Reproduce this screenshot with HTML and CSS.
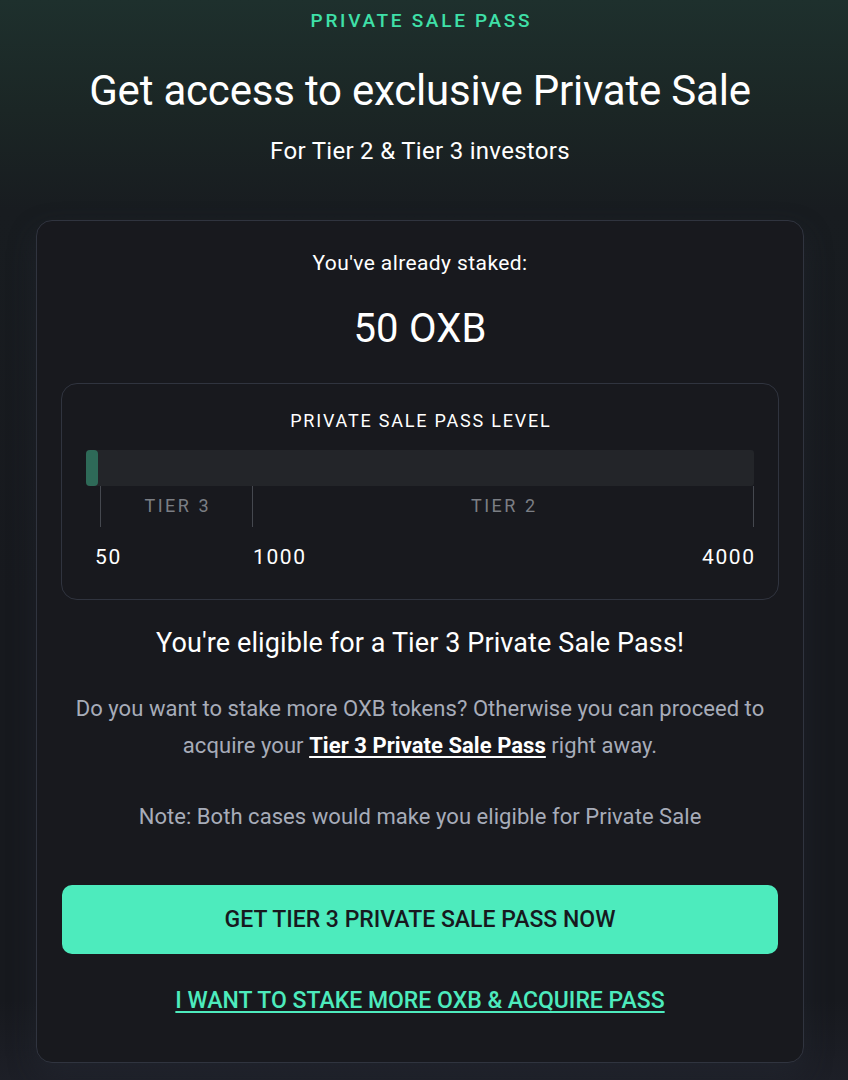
FILE: index.html
```html
<!DOCTYPE html>
<html>
<head>
<meta charset="utf-8">
<link rel="stylesheet" href="styles.css">
</head>
<body>
<div class="page">
  <div class="eyebrow">PRIVATE SALE PASS</div>
  <h1 class="title">Get access to exclusive Private Sale</h1>
  <div class="subtitle">For Tier 2 &amp; Tier 3 investors</div>

  <div class="card">
    <div class="staked-label">You've already staked:</div>
    <div class="staked-value">50 OXB</div>

    <div class="level-box">
      <div class="level-title">PRIVATE SALE PASS LEVEL</div>
      <div class="bar"><div class="bar-fill"></div></div>
      <div class="tiers">
        <div class="tier tier3">TIER 3</div>
        <div class="tier tier2">TIER 2</div>
      </div>
      <div class="scale">
        <span class="s50">50</span>
        <span class="s1000">1000</span>
        <span class="s4000">4000</span>
      </div>
    </div>

    <div class="eligible">You're eligible for a Tier 3 Private Sale Pass!</div>
    <p class="desc">Do you want to stake more OXB tokens? Otherwise you can proceed to acquire your <a class="inline-link">Tier 3 Private Sale Pass</a> right away.</p>
    <p class="note">Note: Both cases would make you eligible for Private Sale</p>

    <button class="cta">GET TIER 3 PRIVATE SALE PASS NOW</button>
    <a class="alt-link">I WANT TO STAKE MORE OXB &amp; ACQUIRE PASS</a>
  </div>
</div>
</body>
</html>
```

FILE: styles.css
```css
* { box-sizing: border-box; }
html, body { margin: 0; padding: 0; }
body {
  background: linear-gradient(180deg, #1e302d 0px, #1b2625 110px, #181c20 210px, #17191e 600px, #17191e 1000px, #1d1f27 1080px);
  background-color: #17191e;
  min-height: 1080px;
  font-family: Roboto, "Liberation Sans", sans-serif;
  color: #ffffff;
}
.page {
  width: 840px;
  display: flex;
  flex-direction: column;
  align-items: center;
  padding-top: 9px;
}
.eyebrow {
  color: #3fe0a8;
  font-size: 19px;
  font-weight: 500;
  letter-spacing: 2.7px;
  line-height: 24px;
  margin-right: -2.7px;
}
.title {
  margin: 33px 0 0;
  font-weight: 400;
  font-size: 42px;
  line-height: 50px;
  letter-spacing: -0.2px;
}
.subtitle {
  margin-top: 20px;
  font-size: 24px;
  line-height: 30px;
  letter-spacing: 0.3px;
}
.card {
  margin-top: 54px;
  width: 768px;
  border: 1px solid #30343f;
  border-radius: 16px;
  background: #18191e;
  padding: 27px 24px 46px;
  display: flex;
  flex-direction: column;
  align-items: center;
  box-shadow: 0 12px 28px rgba(38, 42, 54, 0.45);
}
.staked-label {
  font-size: 21px;
  line-height: 30px;
  letter-spacing: 0.4px;
}
.staked-value {
  margin-top: 27px;
  font-size: 40px;
  line-height: 48px;
  letter-spacing: 0.2px;
}
.level-box {
  margin-top: 30px;
  width: 718px;
  border: 1px solid #30343f;
  border-radius: 16px;
  padding: 25px 24px 29px;
  display: flex;
  flex-direction: column;
}
.level-title {
  text-align: center;
  font-size: 18px;
  letter-spacing: 1.8px;
  line-height: 24px;
  margin-right: -1.8px;
}
.bar {
  margin-top: 17px;
  height: 36px;
  background: #232529;
  border-radius: 3px;
}
.bar-fill {
  width: 12px;
  height: 100%;
  background: #2e6a58;
  border-radius: 4px;
}
.tiers {
  display: flex;
  height: 41px;
  padding-left: 14px;
}
.tier {
  display: flex;
  align-items: center;
  justify-content: center;
  color: #7b7e84;
  font-size: 18px;
  letter-spacing: 2.5px;
  text-indent: 2.5px;
  padding-bottom: 3px;
  border-left: 1px solid #45484f;
}
.tier3 { width: 152px; }
.tier2 { flex: 1; border-right: 1px solid #45484f; }
.scale {
  display: flex;
  margin-top: 17px;
  font-size: 21px;
  line-height: 26px;
  letter-spacing: 1.6px;
}
.s50 { padding-left: 9px; width: 167px; }
.s1000 { flex: 1; }
.s4000 { margin-right: -1.6px; }
.eligible {
  margin-top: 26px;
  font-size: 27px;
  line-height: 34px;
  letter-spacing: 0.1px;
}
.desc {
  margin: 30px 0 0;
  color: #a7acb9;
  font-size: 22px;
  line-height: 37px;
  text-align: center;
  letter-spacing: 0.05px;
  width: 712px;
}
.inline-link {
  color: #ffffff;
  font-weight: 700;
  text-decoration: underline;
  text-underline-offset: 3px;
}
.note {
  margin: 38px 0 0;
  color: #a7acb9;
  font-size: 22px;
  line-height: 30px;
  letter-spacing: 0.05px;
}
.cta {
  margin-top: 53px;
  width: 716px;
  height: 69px;
  border: none;
  border-radius: 10px;
  background: #4debbd;
  color: #17191e;
  font-family: Roboto, "Liberation Sans", sans-serif;
  font-size: 23px;
  font-weight: 500;
}
.alt-link {
  margin-top: 32px;
  color: #4debbd;
  font-size: 23px;
  font-weight: 500;
  line-height: 30px;
  text-decoration: underline;
  text-underline-offset: 3px;
}
```
